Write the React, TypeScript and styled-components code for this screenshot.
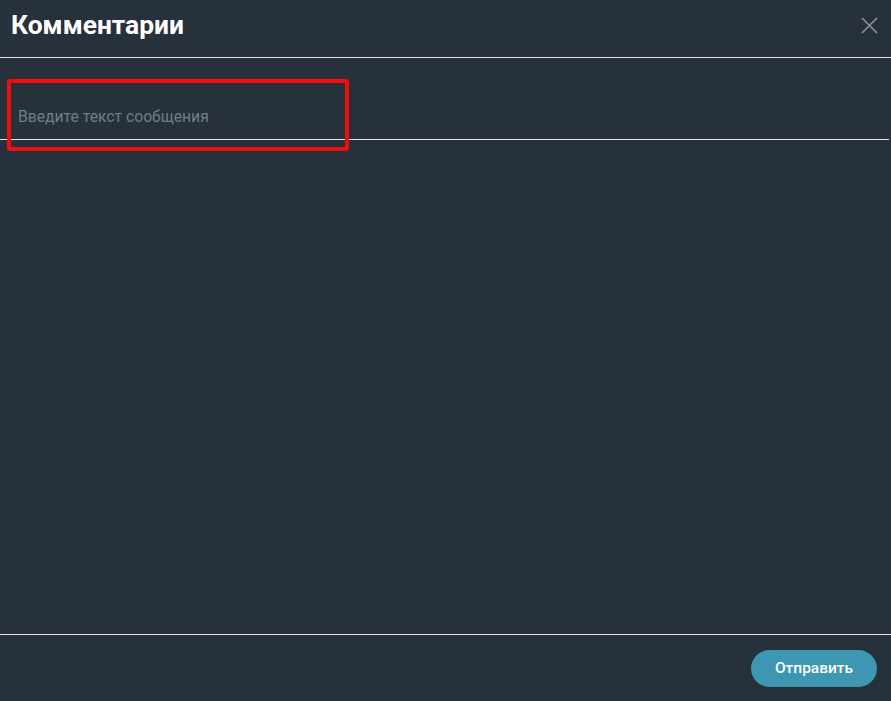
import React from "react";
import styled, { createGlobalStyle } from "styled-components";

const Global = createGlobalStyle`
  html, body { margin: 0; padding: 0; background: #27313b; }
  body { font-family: Roboto, "Noto Sans", Arial, sans-serif; }
  #root { height: 701px; }
  * { box-sizing: border-box; }
`;

const Dialog = styled.div`
  position: relative;
  height: 701px;
  display: flex;
  flex-direction: column;
  background: #27313b;
  color: #fff;
`;

const Header = styled.div`
  height: 58px;
  display: flex;
  align-items: center;
  justify-content: space-between;
  padding: 0 13px 7px 11px;
  border-bottom: 1px solid #dfe3e8;
`;

const Title = styled.h1`
  margin: 0;
  font-size: 26.4px;
  font-weight: 700;
  line-height: 1;
  color: #ffffff;
`;

const CloseButton = styled.button`
  width: 18px;
  height: 18px;
  padding: 0;
  border: 0;
  background: transparent;
  display: flex;
  align-items: center;
  justify-content: center;
  cursor: pointer;
`;

const Body = styled.div`
  flex: 1;
  padding: 39px 2px 0 0;
`;

const Input = styled.input`
  display: block;
  width: 100%;
  height: 43px;
  padding: 0 0 4px 18px;
  border: 0;
  border-bottom: 1px solid #dfe3e8;
  background: transparent;
  font-family: Roboto, "Noto Sans", Arial, sans-serif;
  font-size: 15.7px;
  color: #fff;
  outline: none;
  &::placeholder { color: #6f7d89; }
`;

const Footer = styled.div`
  height: 67px;
  border-top: 1px solid #dfe3e8;
  display: flex;
  align-items: center;
  justify-content: flex-end;
  padding: 0 14px 0 0;
`;

const SendButton = styled.button`
  width: 126px;
  height: 37px;
  border: 0;
  border-radius: 19px;
  background: #3d96b2;
  color: #fff;
  font-family: Roboto, "Noto Sans", Arial, sans-serif;
  font-size: 15.5px;
  font-weight: 500;
  cursor: pointer;
`;

const Highlight = styled.div`
  position: absolute;
  left: 7px;
  top: 79px;
  width: 342px;
  height: 72px;
  border: 4px solid #f00d0d;
  border-radius: 3px;
  pointer-events: none;
`;

export default function App() {
  return (
    <>
      <Global />
      <Dialog>
        <Header>
          <Title>Комментарии</Title>
          <CloseButton aria-label="close">
            <svg width="17" height="17" viewBox="0 0 17 17">
              <path d="M1 1 L16 16 M16 1 L1 16" stroke="#8b9199" strokeWidth="1.6" fill="none" />
            </svg>
          </CloseButton>
        </Header>
        <Body>
          <Input placeholder="Введите текст сообщения" />
        </Body>
        <Footer>
          <SendButton>Отправить</SendButton>
        </Footer>
        <Highlight />
      </Dialog>
    </>
  );
}
